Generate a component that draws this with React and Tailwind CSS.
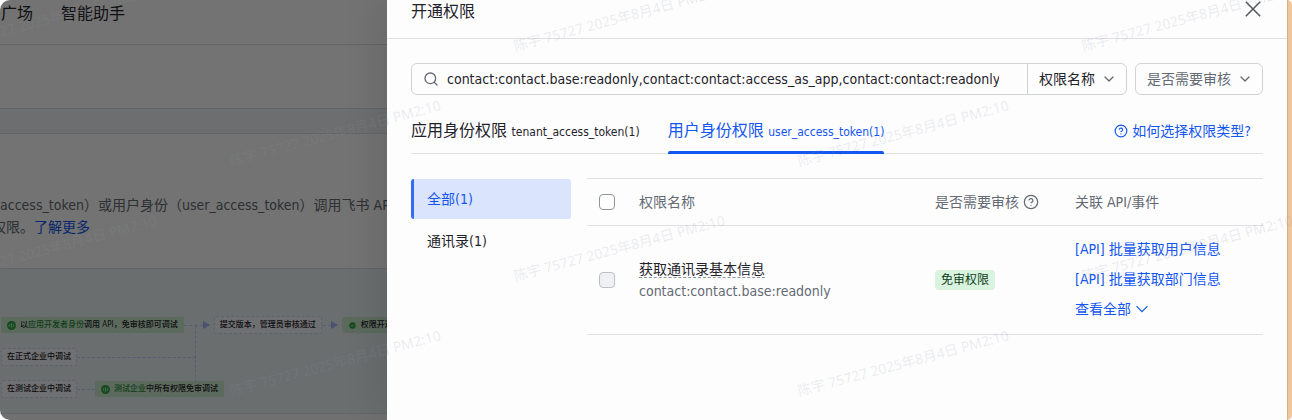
import { useState } from "react";
import { ChevronDown, CircleCheck, CircleQuestionMark, Search } from "lucide-react";

const WATERMARK_TEXT = "陈宇 75727 2025年8月4日 PM2:10";

const tabs = [
    { key: "tenant", name: "应用身份权限", token: "tenant_access_token(1)" },
    { key: "user", name: "用户身份权限", token: "user_access_token(1)" },
];

const categories = [
    { key: "all", name: "全部(1)" },
    { key: "contact", name: "通讯录(1)" },
];

const scopes = [
    {
        name: "获取通讯录基本信息",
        scope: "contact:contact.base:readonly",
        review: "免审权限",
        apis: ["[API] 批量获取用户信息", "[API] 批量获取部门信息"],
    },
];

const CodeBadge = () => (
    <svg className="size-[9px] shrink-0" viewBox="0 0 16 16">
        <circle cx="8" cy="8" r="8" fill="#32a645" />
        <path
            d="M5.5 5.5 3.5 8l2 2.5M10.5 5.5l2 2.5-2 2.5M8 4.5v7"
            fill="none"
            stroke="#d9f5d6"
            strokeWidth="1.4"
        />
    </svg>
);

const FlowArrow = ({ className }) => (
    <div className={`flex items-center shrink-0 ${className}`}>
        <div className="flex-1 border-t border-dashed border-[#bacefd]" />
        <svg className="w-[7px] h-2" viewBox="0 0 7 8">
            <path d="M0 0 7 4 0 8z" fill="#a3b6f5" />
        </svg>
    </div>
);

const GreenNode = ({ icon, children }) => (
    <div className="flex items-center gap-1 h-4 px-[6px] rounded-xs bg-[#cdebcf] whitespace-nowrap">
        {icon}
        <span>{children}</span>
    </div>
);

const PlainNode = ({ children }) => (
    <div className="flex items-center h-[18px] px-[5px] rounded-xs border border-dashed border-[#d0d6ee] bg-[#f7f8fc] whitespace-nowrap">
        {children}
    </div>
);

const FlowChart = () => (
    <div className="flex flex-col gap-[14px] pl-px pt-[47px] h-[144px] text-[8px] leading-[16px] font-medium text-[#1f2329] bg-[#ebf3f7]">
        <div className="flex items-center">
            <GreenNode icon={<CodeBadge />}>
                以<span className="text-[#2a8a39]">应用开发者身份</span>调用
                API，免审核即可调试
            </GreenNode>
            <FlowArrow className="w-[26px] mr-1" />
            <PlainNode>提交版本，管理员审核通过</PlainNode>
            <FlowArrow className="w-4 mr-1" />
            <GreenNode
                icon={
                    <CircleCheck
                        className="size-[9px] shrink-0 text-[#d9f5d6]"
                        fill="#32a645"
                    />
                }
            >
                权限开通成功
            </GreenNode>
        </div>
        <div className="flex items-center w-[195px]">
            <PlainNode>在正式企业中调试</PlainNode>
            <div className="relative flex-1 border-t border-dashed border-[#bacefd]">
                <div className="absolute right-0 -top-8 h-14 border-r border-dashed border-[#bacefd]" />
            </div>
        </div>
        <div className="flex items-center">
            <PlainNode>在测试企业中调试</PlainNode>
            <div className="w-[18px] border-t border-dashed border-[#bacefd]" />
            <GreenNode icon={<CodeBadge />}>
                <span className="text-[#2a8a39]">测试企业</span>
                中所有权限免审调试
            </GreenNode>
        </div>
    </div>
);

const ConsolePage = () => (
    <div className="relative h-full min-w-0 overflow-hidden bg-[#f8f9fa] rounded-l-[10px]">
        <nav className="flex gap-7 h-[45px] pl-px pt-[3px] text-base leading-[22px] text-[#1f2329] bg-white border-b border-[#dee0e3] whitespace-nowrap">
            <a href="#square">广场</a>
            <a href="#assistant">智能助手</a>
        </nav>
        <div className="h-16 bg-white border-b border-[#dee0e3]" />
        <div className="h-[25px] border-b border-[#dee0e3] bg-[#f2f3f5]" />
        <div className="h-[135px] pt-[60px] text-sm leading-[22px] text-[#646a73] bg-white border-b border-[#dee0e3] whitespace-nowrap">
            <p>
                access_token）或用户身份（user_access_token）调用飞书 API
            </p>
            <p className="-ml-2">
                权限。
                <a className="text-[#1456f0]" href="#more">
                    了解更多
                </a>
            </p>
        </div>
        <FlowChart />
        <div className="h-2 border-t border-[#dee0e3]" />
        <div className="absolute inset-0 bg-black/55" />
    </div>
);

const SelectBox = ({ label, className }) => (
    <div className={`relative shrink-0 ${className}`}>
        <select
            aria-label={label}
            className="block w-full h-full pl-[11px] pr-6 text-sm bg-transparent appearance-none outline-none"
        >
            <option>{label}</option>
        </select>
        <ChevronDown className="absolute right-[9px] inset-y-0 my-auto size-4 text-[#646a73] pointer-events-none" />
    </div>
);

const ScopeRow = ({ name, scope, review, apis }) => (
    <tr className="border-b border-[#dee0e3]">
        <td className="px-3">
            <input
                type="checkbox"
                aria-label={name}
                disabled
                className="block size-4 rounded-[4px] border border-[#bbbfc4] bg-[#eff0f1] appearance-none"
            />
        </td>
        <td className="px-3">
            <p className="leading-[22px]">
                <span className="border-b border-dashed border-[#8f959e]">
                    {name}
                </span>
            </p>
            <p className="leading-[22px] text-[#646a73]">{scope}</p>
        </td>
        <td className="px-3">
            <span className="block w-fit px-1.5 text-xs leading-5 rounded-[4px] text-[#0f3d1a] bg-[#d9f3de]">
                {review}
            </span>
        </td>
        <td className="px-3 pt-2 pb-2.5 text-[#1456f0]">
            {apis.map((api) => (
                <a key={api} href="#api" className="block leading-[30px]">
                    {api}
                </a>
            ))}
            <button className="flex items-center gap-1 leading-[30px]">
                查看全部
                <svg
                    className="w-[14px] h-2"
                    viewBox="0 0 14 8"
                    fill="none"
                    stroke="currentColor"
                    strokeWidth="1.2"
                >
                    <path d="M1.5 1.2 7 6.7l5.5-5.5" />
                </svg>
            </button>
        </td>
    </tr>
);

const ScopeTable = () => (
    <table className="flex-1 w-full text-sm text-left border-collapse table-fixed">
        <colgroup>
            <col className="w-10" />
            <col />
            <col className="w-[140px]" />
            <col className="w-[200px]" />
        </colgroup>
        <thead>
            <tr className="h-[47px] border-y border-[#dee0e3] text-[#646a73]">
                <th className="px-3 font-normal">
                    <input
                        type="checkbox"
                        aria-label="全选"
                        className="block size-4 rounded-[4px] border border-[#8f959e] bg-white appearance-none"
                    />
                </th>
                <th className="px-3 font-normal">权限名称</th>
                <th className="px-3 font-normal whitespace-nowrap">
                    <span className="flex items-center gap-1">
                        是否需要审核
                        <CircleQuestionMark
                            className="size-4"
                            strokeWidth={1.8}
                        />
                    </span>
                </th>
                <th className="px-3 font-normal">关联 API/事件</th>
            </tr>
        </thead>
        <tbody>
            {scopes.map((item) => (
                <ScopeRow key={item.scope} {...item} />
            ))}
        </tbody>
    </table>
);

const PermissionDrawer = () => {
    const [tab, setTab] = useState("user");
    const [category, setCategory] = useState("all");
    const [keyword, setKeyword] = useState(
        "contact:contact.base:readonly,contact:contact:access_as_app,contact:contact:readonly,contact:contact:readonly_as_app"
    );

    return (
        <section className="relative h-full min-w-0 bg-[#fdfdfe] shadow-[-8px_0_36px_rgba(0,0,0,0.1)]">
            <header className="flex items-start justify-between px-6 pb-[14px] border-b border-[#dee0e3]">
                <h2 className="text-base leading-6">开通权限</h2>
                <button aria-label="关闭" className="pt-px pr-0.5">
                    <svg
                        className="size-4"
                        viewBox="0 0 16 16"
                        stroke="#50555e"
                        strokeWidth="1.5"
                    >
                        <path d="M.8.8l14.4 14.4M15.2.8.8 15.2" />
                    </svg>
                </button>
            </header>

            <div className="px-6 pt-6">
                <div className="flex gap-2">
                    <div className="flex items-center flex-1 h-8 min-w-0 border border-[#d0d3d6] rounded-md">
                        <Search
                            className="ml-[11px] size-4 shrink-0 text-[#646a73]"
                            strokeWidth={2}
                        />
                        <input
                            type="text"
                            aria-label="搜索权限"
                            className="flex-1 min-w-0 ml-2 mr-7 text-sm bg-transparent outline-none"
                            value={keyword}
                            onChange={(e) => setKeyword(e.target.value)}
                        />
                        <SelectBox
                            label="权限名称"
                            className="w-[99px] h-full border-l border-[#d0d3d6]"
                        />
                    </div>
                    <SelectBox
                        label="是否需要审核"
                        className="w-32 h-8 border border-[#d0d3d6] rounded-md text-[#646a73]"
                    />
                </div>

                <div className="flex items-end justify-between border-b border-[#dee0e3]">
                    <div className="flex gap-7">
                        {tabs.map((item) => (
                            <button
                                key={item.key}
                                onClick={() => setTab(item.key)}
                                className={`relative pt-6 h-[58px] pb-2.5 leading-6 whitespace-nowrap ${
                                    tab === item.key ? "text-[#1456f0]" : ""
                                }`}
                            >
                                <span className="text-base leading-6">
                                    {item.name}
                                </span>{" "}
                                <span className="text-xs leading-none">
                                    {item.token}
                                </span>
                                {tab === item.key && (
                                    <span className="absolute inset-x-0 -bottom-px h-[3px] rounded-t-xs bg-[#1456f0]" />
                                )}
                            </button>
                        ))}
                    </div>
                    <a
                        href="#help"
                        className="flex items-center gap-1 pb-2.5 pr-3 text-sm leading-6 text-[#1456f0]"
                    >
                        <CircleQuestionMark
                            className="size-[14px]"
                            strokeWidth={2}
                        />
                        如何选择权限类型?
                    </a>
                </div>

                <div className="flex items-start gap-4 mt-6">
                    <ul className="flex flex-col gap-0.5 w-40 pt-px text-sm shrink-0">
                        {categories.map((item) => (
                            <li key={item.key}>
                                <button
                                    onClick={() => setCategory(item.key)}
                                    className={`w-full h-10 pl-[13px] text-left border-l-[3px] rounded-[3px] ${
                                        category === item.key
                                            ? "border-[#336df4] bg-[#dae4fd] text-[#1456f0]"
                                            : "border-transparent"
                                    }`}
                                >
                                    {item.name}
                                </button>
                            </li>
                        ))}
                    </ul>
                    <ScopeTable />
                </div>
            </div>
        </section>
    );
};

// tiled over the whole window, every second row is shifted by half a step
const Watermark = () => {
    const marks = [];
    for (let row = 0; row < 8; row++) {
        for (let col = 0; col < 4; col++) {
            marks.push({
                left: col * 568 - 51 - (row % 2) * 284,
                top: row * 115 + 34,
            });
        }
    }

    return (
        <div className="absolute inset-0 overflow-hidden pointer-events-none select-none">
            {marks.map(({ left, top }) => (
                <span
                    key={`${left}-${top}`}
                    className="absolute text-sm leading-6 whitespace-nowrap origin-bottom-left -rotate-[15deg] text-[#8f959e]/18 font-['Noto_Sans','Noto_Sans_CJK_SC',sans-serif]"
                    style={{ left, top }}
                >
                    {WATERMARK_TEXT}
                </span>
            ))}
        </div>
    );
};

export default function App() {
    return (
        <div className="relative flex h-screen overflow-hidden bg-white text-[#1f2329] font-['DejaVu_Sans_Condensed','Noto_Sans_CJK_SC',sans-serif]">
            <div className="grid flex-1 min-w-0 grid-cols-[43fr_100fr]">
                <ConsolePage />
                <PermissionDrawer />
            </div>
            <div className="w-[5px] rounded-r-[5px] bg-[#f5cba1] border-l border-[#dcb48c]" />
            <Watermark />
        </div>
    );
}
